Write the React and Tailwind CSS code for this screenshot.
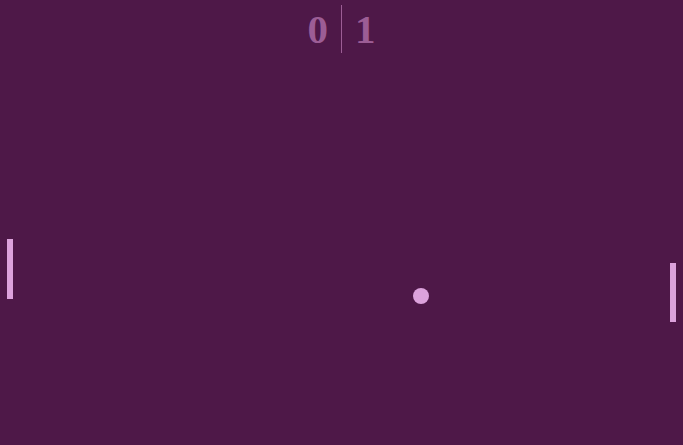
export default function App() {
  return (
    <div className="relative w-[683px] h-[445px] overflow-hidden bg-[#4e1848]">
      {/* Score */}
      <div className="flex justify-center pt-[5px]">
        <div className="flex items-stretch gap-[13px] text-[#9c5d95] font-bold text-[41px] leading-[47px] font-['Liberation_Serif',serif]">
          <span className="mt-[1px]">0</span>
          <div className="w-px bg-[#9c5d95]" />
          <span className="mt-[1px]">1</span>
        </div>
      </div>

      {/* Paddles */}
      <div className="absolute left-[7px] top-[239px] w-[6px] h-[60px] bg-[#dca2dc]" />
      <div className="absolute left-[670px] top-[263px] w-[6px] h-[59px] bg-[#dca2dc]" />

      {/* Ball */}
      <div className="absolute left-[413px] top-[288px] w-[16px] h-[16px] rounded-full bg-[#dca2dc]" />
    </div>
  );
}
